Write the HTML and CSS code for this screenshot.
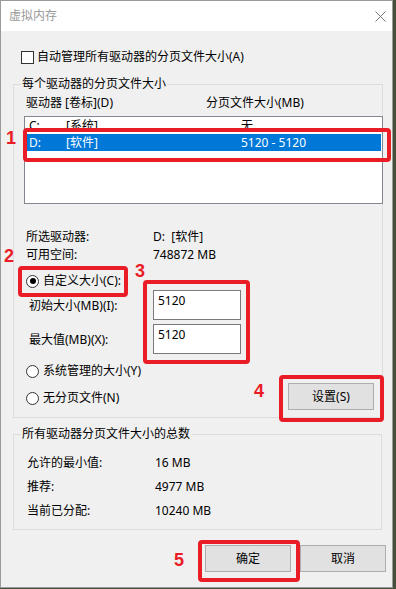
FILE: index.html
```html
<html>
<head>
<meta charset="utf-8" />
<link rel="stylesheet" href="styles.css">
</head>
<body>
<div class="window">
	<div class="titlebar">
		<span class="title">虚拟内存</span>
		<svg class="close" width="11" height="11" viewBox="0 0 11 11"><path d="M0.5 0.5 L10.5 10.5 M10.5 0.5 L0.5 10.5" stroke="#777" stroke-width="1" fill="none" /></svg>
	</div>
	<div class="client">
		<div class="checkrow"><span class="checkbox"></span>自动管理所有驱动器的分页文件大小(A)</div>

		<fieldset class="group group1">
			<legend>每个驱动器的分页文件大小</legend>
			<div class="colhead"><span class="c1">驱动器 [卷标](D)</span><span>分页文件大小(MB)</span></div>
			<div class="listbox">
				<div class="lrow"><span class="d1">C:</span><span class="d2">[系统]</span><span>无</span></div>
				<div class="lrow selected"><span class="d1">D:</span><span class="d2">[软件]</span><span>5120 - 5120</span></div>
			</div>
			<div class="info first"><span class="ilabel">所选驱动器:</span><span>D:&nbsp;&nbsp;[软件]</span></div>
			<div class="info"><span class="ilabel">可用空间:</span><span>748872 MB</span></div>
			<div class="radiorow custom"><span class="radio checked"></span>自定义大小(C):</div>
			<div class="inrow first"><span class="inlabel">初始大小(MB)(I):</span><span class="textbox">5120</span></div>
			<div class="inrow"><span class="inlabel">最大值(MB)(X):</span><span class="textbox">5120</span></div>
			<div class="radiorow sys"><span class="radio"></span>系统管理的大小(Y)</div>
			<div class="lastrow">
				<div class="radiorow"><span class="radio"></span>无分页文件(N)</div>
				<span class="button set">设置(S)</span>
			</div>
		</fieldset>

		<fieldset class="group group2">
			<legend>所有驱动器分页文件大小的总数</legend>
			<div class="total first"><span class="tlabel">允许的最小值:</span><span>16 MB</span></div>
			<div class="total"><span class="tlabel">推荐:</span><span>4977 MB</span></div>
			<div class="total"><span class="tlabel">当前已分配:</span><span>10240 MB</span></div>
		</fieldset>

		<div class="buttons">
			<span class="button">确定</span>
			<span class="button">取消</span>
		</div>
	</div>

	<div class="mark box1"></div><span class="num n1">1</span>
	<div class="mark box2"></div><span class="num n2">2</span>
	<div class="mark box3"></div><span class="num n3">3</span>
	<div class="mark box4"></div><span class="num n4">4</span>
	<div class="mark box5"></div><span class="num n5">5</span>
</div>
</body>
</html>
```
FILE: styles.css
```css
body {
	margin: 0;
	background-color: #46513a;
	font-family: "Noto Sans", "Noto Sans CJK SC", sans-serif;
	font-size: 12px;
	line-height: 16px;
	color: #000;
}
.window {
	position: relative;
	width: 391px;
	height: 586px;
	border: 1px solid #9a9a9a;
	background-color: #f0f0f0;
}
.titlebar {
	height: 30px;
	background-color: #fff;
	display: flex;
	align-items: center;
	justify-content: space-between;
	padding: 0 6px 0 8px;
}
.title {
	color: #999;
	font-size: 12px;
}
.close {
	margin-top: 1px;
}
.client {
	padding: 18px 0 0 0;
}
.checkrow {
	display: flex;
	align-items: center;
	height: 16px;
	padding-left: 20px;
}
.checkbox {
	width: 11px;
	height: 11px;
	border: 1px solid #333;
	background-color: #fff;
	margin-right: 3px;
}
.group {
	margin: 0 0 0 12px;
	padding: 0;
	border: 1px solid #dcdcdc;
	min-width: 0;
}
.group legend {
	margin-left: 7px;
	padding: 0 1px;
	line-height: 16px;
}
.group1 {
	width: 368px;
	margin-top: 11px;
	padding-bottom: 7px;
}
.colhead {
	display: flex;
	margin-top: 3px;
	padding-left: 12px;
}
.colhead .c1 {
	width: 180px;
}
.listbox {
	margin: 5px 0 0 10px;
	width: 357px;
	height: 86px;
	border: 1px solid #828790;
	background-color: #fff;
	padding-top: 0;
}
.lrow {
	display: flex;
	height: 17px;
	line-height: 17px;
	margin: 0 1px;
	padding-left: 3px;
}
.lrow.selected {
	background-color: #0078d7;
	color: #fff;
}
.d1 {
	width: 37px;
}
.d2 {
	width: 175px;
}
.info {
	display: flex;
	height: 18px;
	line-height: 18px;
	padding-left: 12px;
}
.info.first {
	margin-top: 24px;
}
.ilabel {
	width: 127px;
}
.radiorow {
	display: flex;
	align-items: center;
	height: 16px;
	padding-left: 12px;
}
.radio {
	position: relative;
	width: 11px;
	height: 11px;
	border: 1px solid #333;
	border-radius: 50%;
	background-color: #fff;
	margin-right: 4px;
}
.radio.checked::after {
	content: "";
	position: absolute;
	left: 2.5px;
	top: 2.5px;
	width: 6px;
	height: 6px;
	border-radius: 50%;
	background-color: #000;
}
.radiorow.custom {
	margin-top: 9px;
}
.inrow {
	display: flex;
	align-items: center;
	padding-left: 15px;
	margin-top: 4px;
}
.inrow.first {
	margin-top: 1px;
}
.inlabel {
	width: 124px;
	padding-top: 2px;
}
.textbox {
	width: 82px;
	height: 26px;
	border: 1px solid #7a7a7a;
	background-color: #fff;
	padding: 2px 0 0 4px;
	line-height: 16px;
}
.radiorow.sys {
	margin-top: 9px;
}
.lastrow {
	display: flex;
	align-items: center;
	justify-content: space-between;
	margin-top: 4px;
	padding-right: 8px;
}
.lastrow .radiorow {
	margin-top: 3px;
}
.button {
	display: flex;
	align-items: center;
	justify-content: center;
	width: 84px;
	height: 25px;
	border: 1px solid #adadad;
	background-color: #e1e1e1;
}
.group2 {
	width: 367px;
	margin-top: 8px;
	padding-bottom: 6px;
}
.total {
	display: flex;
	align-items: center;
	height: 24px;
	padding-left: 13px;
}
.total.first {
	margin-top: 9px;
}
.tlabel {
	width: 128px;
}
.buttons {
	display: flex;
	justify-content: flex-end;
	gap: 9px;
	margin-top: 15px;
	padding-right: 6px;
}
.mark {
	position: absolute;
	border: 4px solid #ea1c26;
	border-radius: 4px;
}
.box1 { left: 22px; top: 127px; width: 360px; height: 26px; }
.box2 { left: 17px; top: 265px; width: 102px; height: 23px; }
.box3 { left: 142px; top: 279px; width: 99px; height: 76px; }
.box4 { left: 278px; top: 374px; width: 97px; height: 39px; }
.box5 { left: 197px; top: 539px; width: 94px; height: 34px; }
.num {
	position: absolute;
	color: #ea1c26;
	font-family: "Liberation Sans", sans-serif;
	font-weight: bold;
	font-size: 18px;
	line-height: 18px;
}
.n1 { left: 5px; top: 128px; }
.n2 { left: 3px; top: 246px; }
.n3 { left: 134px; top: 261px; }
.n4 { left: 253px; top: 381px; }
.n5 { left: 173px; top: 550px; }
```
